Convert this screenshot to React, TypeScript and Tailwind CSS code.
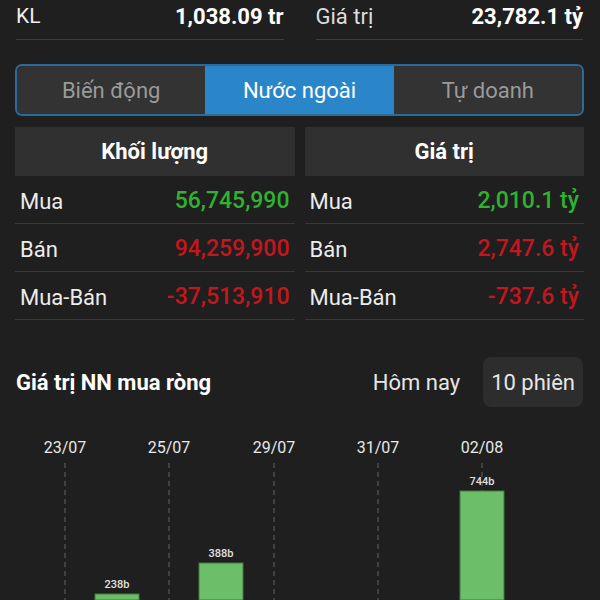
import React from "react";

const rowsVol = [
  { label: "Mua", value: "56,745,990", color: "text-[#2fb32f]" },
  { label: "Bán", value: "94,259,900", color: "text-[#c4161c]" },
  { label: "Mua-Bán", value: "-37,513,910", color: "text-[#c4161c]" },
];

const rowsVal = [
  { label: "Mua", value: "2,010.1 tỷ", color: "text-[#2fb32f]" },
  { label: "Bán", value: "2,747.6 tỷ", color: "text-[#c4161c]" },
  { label: "Mua-Bán", value: "-737.6 tỷ", color: "text-[#c4161c]" },
];

const dates = [
  { x: 65, label: "23/07" },
  { x: 169, label: "25/07" },
  { x: 274, label: "29/07" },
  { x: 378, label: "31/07" },
  { x: 482, label: "02/08" },
];

// bars: y relative to chart top (page y 420)
const bars = [
  { cx: 117, top: 174, label: "238b" },
  { cx: 221, top: 143, label: "388b" },
  { cx: 482, top: 71, label: "744b" },
];

function StatTable({ title, rows }: { title: string; rows: typeof rowsVol }) {
  return (
    <div className="flex flex-col">
      <div className="h-[49px] bg-[#303030] flex items-center justify-center text-[22px] font-bold text-white">
        {title}
      </div>
      {rows.map((r) => (
        <div
          key={r.label}
          className="h-[48px] pt-[4px] flex items-center justify-between px-[5px] border-b border-[#393939]"
        >
          <span className="text-[22px] text-[#ececec]">{r.label}</span>
          <span className={`text-[23px] font-medium ${r.color}`}>{r.value}</span>
        </div>
      ))}
    </div>
  );
}

export default function App() {
  return (
    <div className="w-[600px] h-[600px] overflow-hidden bg-[#1f1f1f] text-white font-['Roboto',sans-serif]">
      {/* Summary */}
      <div className="flex gap-8 pl-4 pr-[17px]">
        <div className="flex-1 h-[40px] pb-[6px] flex items-center justify-between border-b border-[#3d3d3d]">
          <span className="text-[21px] text-[#eeeeee]">KL</span>
          <span className="text-[22px] font-bold">1,038.09 tr</span>
        </div>
        <div className="flex-1 h-[40px] pb-[6px] flex items-center justify-between border-b border-[#3d3d3d]">
          <span className="text-[22px] text-[#dddddd]">Giá trị</span>
          <span className="text-[22px] font-bold">23,782.1 tỷ</span>
        </div>
      </div>

      {/* Tabs */}
      <div className="mt-[24px] ml-[15px] mr-[16px] h-[52px] border-2 border-[#2c6b99] rounded-[7px] overflow-hidden flex text-[22px]">
        <div className="flex-1 bg-[#333333] flex items-center justify-center text-[#9a9a9a]">Biến động</div>
        <div className="flex-1 bg-[#2a86c8] flex items-center justify-center text-white">Nước ngoài</div>
        <div className="flex-1 bg-[#333333] flex items-center justify-center text-[#9a9a9a]">Tự doanh</div>
      </div>

      {/* Tables */}
      <div className="mt-[11px] pl-[15px] pr-[16px] grid grid-cols-2 gap-[10px]">
        <StatTable title="Khối lượng" rows={rowsVol} />
        <StatTable title="Giá trị" rows={rowsVal} />
      </div>

      {/* Net foreign value */}
      <div className="mt-[37px] pl-4 pr-[17px] flex items-center justify-between">
        <span className="text-[22px] font-bold">Giá trị NN mua ròng</span>
        <div className="flex items-center gap-[23px] text-[22px] text-[#e6e6e6]">
          <span>Hôm nay</span>
          <span className="h-[50px] px-[8px] flex items-center bg-[#2d2d2d] rounded-[8px]">10 phiên</span>
        </div>
      </div>

      {/* Chart */}
      <svg width="600" height="180" className="block mt-[13px]">
        {dates.map((d) => (
          <g key={d.label}>
            <text
              x={d.x}
              y={33}
              textAnchor="middle"
              fill="#e8e8e8"
              fontSize="16"
              fontFamily="Roboto, sans-serif"
            >
              {d.label}
            </text>
            <line
              x1={d.x}
              x2={d.x}
              y1={43}
              y2={180}
              stroke="#4d4d4d"
              strokeWidth="1.5"
              strokeDasharray="5 4"
            />
          </g>
        ))}
        {bars.map((b) => (
          <g key={b.label}>
            <rect x={b.cx - 22} y={b.top} width="44" height={180 - b.top} fill="#6dbe69" stroke="#3e7d3c" strokeWidth="1" />
            <text
              x={b.cx}
              y={b.top - 6}
              textAnchor="middle"
              fill="#e0e0e0"
              fontSize="11"
              fontWeight="500"
              fontFamily="Roboto, sans-serif"
            >
              {b.label}
            </text>
          </g>
        ))}
      </svg>
    </div>
  );
}
